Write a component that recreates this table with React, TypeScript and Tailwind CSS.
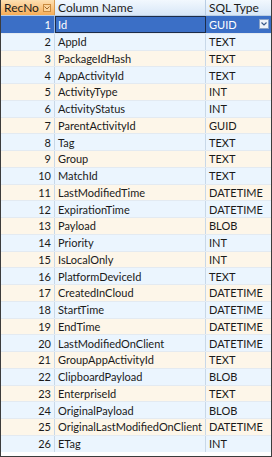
import React from 'react';

const rows: [string, string][] = [
  ['Id', 'GUID'],
  ['AppId', 'TEXT'],
  ['PackageIdHash', 'TEXT'],
  ['AppActivityId', 'TEXT'],
  ['ActivityType', 'INT'],
  ['ActivityStatus', 'INT'],
  ['ParentActivityId', 'GUID'],
  ['Tag', 'TEXT'],
  ['Group', 'TEXT'],
  ['MatchId', 'TEXT'],
  ['LastModifiedTime', 'DATETIME'],
  ['ExpirationTime', 'DATETIME'],
  ['Payload', 'BLOB'],
  ['Priority', 'INT'],
  ['IsLocalOnly', 'INT'],
  ['PlatformDeviceId', 'TEXT'],
  ['CreatedInCloud', 'DATETIME'],
  ['StartTime', 'DATETIME'],
  ['EndTime', 'DATETIME'],
  ['LastModifiedOnClient', 'DATETIME'],
  ['GroupAppActivityId', 'TEXT'],
  ['ClipboardPayload', 'BLOB'],
  ['EnterpriseId', 'TEXT'],
  ['OriginalPayload', 'BLOB'],
  ['OriginalLastModifiedOnClient', 'DATETIME'],
  ['ETag', 'INT'],
];

const App: React.FC = () => {
  return (
    <div
      className="w-[272px] h-[457px] bg-white border-x border-b border-[#3c3c3c] flex flex-col text-[11px] leading-none text-[#1a1a1a]"
      style={{ fontFamily: 'Lato, "Noto Sans", sans-serif' }}
    >
      {/* Header */}
      <div className="flex h-[16px] border-b border-[#b9cde3] text-[12px]">
        <div className="w-[54px] flex items-center justify-between pl-[3px] pr-[3px] bg-gradient-to-b from-[#fde0b2] to-[#f6ad55] border-r border-[#d99a4e]">
          <span>RecNo</span>
          <span className="w-[8px] h-[8px] border border-[#c98a3e] bg-[#fbd49c] flex items-center justify-center">
            <svg width="6" height="4" viewBox="0 0 6 4">
              <path d="M0.5 0.5 L3 3 L5.5 0.5" fill="none" stroke="#a0662a" strokeWidth="1" />
            </svg>
          </span>
        </div>
        <div className="w-[151px] flex items-center pl-[3px] bg-gradient-to-b from-[#f2f8fe] to-[#d8e7f7] border-r border-[#b9cde3]">
          Column Name
        </div>
        <div className="flex-1 flex items-center pl-[3px] bg-gradient-to-b from-[#f2f8fe] to-[#d8e7f7]">
          SQL Type
        </div>
      </div>

      {/* Rows */}
      {rows.map(([name, type], i) => {
        const n = i + 1;
        if (n === 1) {
          return (
            <div key={n} className="flex h-[16.75px] bg-[#3b6fc6] text-white">
              <div className="w-[54px] flex items-center justify-end pr-[3px] border-r border-[#9ab7de]">{n}</div>
              <div className="w-[151px] flex items-center pl-[2px] border border-[#1c2c48]">{name}</div>
              <div className="flex-1 flex items-center justify-between pl-[3px] pr-[2px]">
                <span>{type}</span>
                <span className="w-[10px] h-[10px] bg-[#eef3fa] border border-[#8aa3c8] flex items-center justify-center">
                  <svg width="6" height="4" viewBox="0 0 6 4">
                    <path d="M0.5 0.5 L3 3 L5.5 0.5" fill="none" stroke="#3b5a8a" strokeWidth="1.2" />
                  </svg>
                </span>
              </div>
            </div>
          );
        }
        const bg = n % 2 === 0 ? 'bg-[#ebf5fe]' : 'bg-[#fdf6e9]';
        return (
          <div key={n} className={`flex h-[16.75px] border-t border-[#e3eaf1] ${bg}`}>
            <div className="w-[54px] flex items-center justify-end pr-[3px] border-r border-[#c8d8e8]">{n}</div>
            <div className="w-[151px] flex items-center pl-[3px] border-r border-[#c8d8e8] whitespace-nowrap overflow-hidden">{name}</div>
            <div className="flex-1 flex items-center pl-[3px]">{type}</div>
          </div>
        );
      })}
    </div>
  );
};

export default App;
